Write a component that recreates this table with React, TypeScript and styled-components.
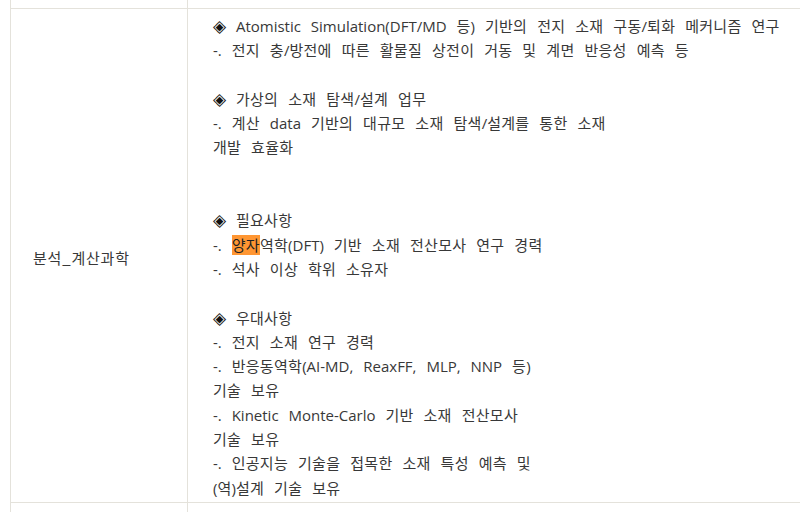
import React from 'react'
import styled, { createGlobalStyle } from 'styled-components'

const GlobalStyle = createGlobalStyle`
  html, body {
    margin: 0;
    padding: 0;
    background: #ffffff;
    overflow: hidden;
  }
  body {
    font-family: "Open Sans", "Noto Sans CJK KR", sans-serif;
    color: #383838;
  }
`

const Page = styled.div`
  width: 800px;
  height: 512px;
  overflow: hidden;
  padding-left: 10px;
  box-sizing: border-box;
`

const Grid = styled.div`
  width: 900px;
  border-left: 1px solid #e4e2db;
`

const Row = styled.div<{ $h?: number }>`
  display: grid;
  grid-template-columns: 176px 1fr;
  border-top: 1px solid #e4e2db;
  height: ${(p) => (p.$h ? `${p.$h}px` : 'auto')};
  &:first-child {
    border-top: none;
  }
`

const HeadCell = styled.div`
  display: flex;
  align-items: center;
  padding: 4px 0 0 22px;
  font-family: "Noto Sans CJK KR", sans-serif;
  font-size: 15px;
  letter-spacing: 0.8px;
  white-space: nowrap;
`

const BodyCell = styled.div`
  border-left: 1px solid #e4e2db;
  padding: 5px 0 2px 25px;
  font-size: 15px;
  word-spacing: 6px;
`

const Line = styled.div`
  height: 24.3px;
  line-height: 24.3px;
  white-space: nowrap;
`

const Ko = styled.span`
  font-family: "Noto Sans CJK KR", sans-serif;
  font-size: 15px;
  letter-spacing: 0.3px;
`

const Bullet = styled.span`
  font-family: "Noto Sans CJK KR", sans-serif;
  font-size: 17px;
  line-height: 1;
  color: #111111;
`

const Mark = styled.span`
  background: #ff9632;
  color: #222222;
  word-spacing: 0;
`

const HANGUL = /([\u3131-\uD79D]+)/

// hangul runs get the CJK face, the rest stays in the latin face
const split = (text: string) =>
  text.split(HANGUL).map((part, i) =>
    HANGUL.test(part) ? <Ko key={i}>{part}</Ko> : part,
  )

const item = (text: string) => (
  <>
    <Bullet>◈</Bullet> {split(text)}
  </>
)

const lines: React.ReactNode[] = [
  item('Atomistic Simulation(DFT/MD 등) 기반의 전지 소재 구동/퇴화 메커니즘 연구'),
  split('-. 전지 충/방전에 따른 활물질 상전이 거동 및 계면 반응성 예측 등'),
  '',
  item('가상의 소재 탐색/설계 업무'),
  split('-. 계산 data 기반의 대규모 소재 탐색/설계를 통한 소재'),
  split('개발 효율화'),
  '',
  '',
  item('필요사항'),
  <>-. <Mark>{split('양자')}</Mark>{split('역학(DFT) 기반 소재 전산모사 연구 경력')}</>,
  split('-. 석사 이상 학위 소유자'),
  '',
  item('우대사항'),
  split('-. 전지 소재 연구 경력'),
  split('-. 반응동역학(AI-MD, ReaxFF, MLP, NNP 등)'),
  split('기술 보유'),
  split('-. Kinetic Monte-Carlo 기반 소재 전산모사'),
  split('기술 보유'),
  split('-. 인공지능 기술을 접목한 소재 특성 예측 및'),
  split('(역)설계 기술 보유'),
]

export default function App() {
  return (
    <>
      <GlobalStyle />
      <Page>
        <Grid>
          <Row $h={8}>
            <div />
            <BodyCell />
          </Row>
          <Row>
            <HeadCell>분석_계산과학</HeadCell>
            <BodyCell>
              {lines.map((l, i) => (
                <Line key={i}>{l === '' ? '\u00a0' : l}</Line>
              ))}
            </BodyCell>
          </Row>
          <Row $h={20}>
            <div />
            <BodyCell />
          </Row>
        </Grid>
      </Page>
    </>
  )
}
